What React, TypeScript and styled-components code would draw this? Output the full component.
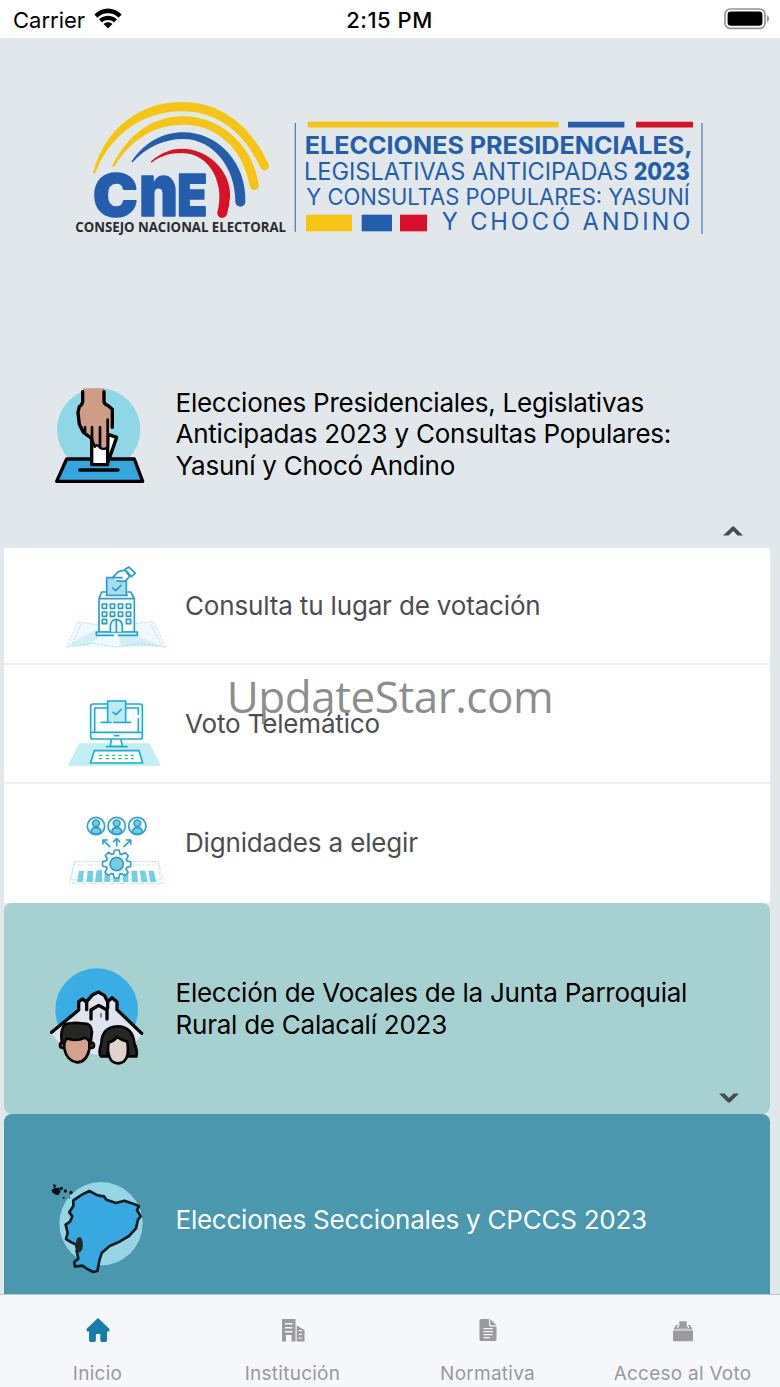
import type { ReactNode } from 'react';
import styled, { createGlobalStyle } from 'styled-components';

const BLUE = '#245dac';
const YELLOW = '#f6c514';
const RED = '#d91029';

const GlobalStyle = createGlobalStyle`
  * {
    box-sizing: border-box;
  }
  body {
    margin: 0;
    background: #e1e7ea;
    font-family: Inter, 'Liberation Sans', sans-serif;
  }
`;

/* ---------- Status bar ---------- */

function StatusBar() {
  return (
    <S.StatusBar>
      <S.Carrier>
        Carrier
        <svg width="28" height="21" viewBox="0 0 28 21">
          <path d="M0.3 6.6C8 -1.4 20 -1.4 27.7 6.6L24.6 9.7C18.6 3.8 9.4 3.8 3.4 9.7Z" />
          <path d="M5 11.3C10.2 6.5 17.8 6.5 23 11.3L20 14.4C16.4 11.2 11.6 11.2 8 14.4Z" />
          <path d="M9.5 15.9C12.2 13.7 15.8 13.7 18.5 15.9L14 20.6Z" />
        </svg>
      </S.Carrier>
      <S.Time>2:15 PM</S.Time>
      <S.Battery>
        <svg width="46" height="22" viewBox="0 0 46 22">
          <rect x="1" y="1" width="40" height="19.4" rx="5.5" fill="none" stroke="#949494" strokeWidth="1.7" />
          <rect x="3.6" y="3.6" width="34.8" height="14.2" rx="3.2" />
          <path d="M43 7.3C45.7 8.5 45.7 12.9 43 14.1Z" fill="#949494" />
        </svg>
      </S.Battery>
    </S.StatusBar>
  );
}

/* ---------- Logo ---------- */

function CneLogo() {
  return (
    <svg width="226" height="155" viewBox="0 0 678 465">
      <path
        fill={YELLOW}
        d="M84 250C120 110 230 36 350 36C470 36 557 108 610 221A13 13 0 0 1 587 235C540 130 460 64 350 64C240 64 135 130 91 250Z"
      />
      <path
        fill={YELLOW}
        d="M141 228C190 130 265 79 355 79C470 79 566 170 581 284A13 13 0 0 1 555 290C535 180 460 104 355 104C270 104 200 145 148 230Z"
      />
      <path
        fill={BLUE}
        d="M199 215C240 155 295 127 355 127C460 127 545 220 541 335A14.500 14.500 0 0 1 511 335C512 235 445 147 355 147C300 147 245 170 203 217Z"
      />
      <path
        fill={RED}
        d="M257 215C285 190 315 176 350 176C435 176 500 250 495 320Q493 350 486 372A14.500 14.500 0 0 1 457 366C480 290 440 189 350 189C315 189 285 198 260 218Z"
      />
      <g fill={BLUE} stroke={BLUE} strokeWidth="5" strokeLinejoin="round" fontWeight="900">
        <text x="84" y="377" fontSize="172" textLength="134" lengthAdjust="spacingAndGlyphs">C</text>
        <text x="222" y="377" fontSize="218" textLength="117" lengthAdjust="spacingAndGlyphs">n</text>
        <text x="337" y="377" fontSize="174" textLength="90" lengthAdjust="spacingAndGlyphs">E</text>
      </g>
      <text
        x="31"
        y="426"
        fontSize="42"
        fontFamily="'Open Sans', sans-serif"
        fontWeight="700"
        fill="#2b2a2d"
        textLength="632"
        lengthAdjust="spacingAndGlyphs"
      >
        CONSEJO NACIONAL ELECTORAL
      </text>
    </svg>
  );
}

function ElectionTitle() {
  return (
    <svg width="420" height="130" viewBox="0 0 1260 390">
      <path d="M16 39V365M1236 39V372" stroke="#5b82b8" strokeWidth="4" />
      <path d="M53 44H806" stroke={YELLOW} strokeWidth="17" />
      <path d="M834 44H1003" stroke={BLUE} strokeWidth="17" />
      <path d="M1038 44H1209" stroke={RED} strokeWidth="17" />
      <g fill={BLUE}>
        <text x="44" y="131" fontSize="71" fontWeight="700" textLength="1164" lengthAdjust="spacingAndGlyphs">
          ELECCIONES PRESIDENCIALES,
        </text>
        <text x="42" y="209" fontSize="71" fontWeight="400" textLength="972" lengthAdjust="spacingAndGlyphs">
          LEGISLATIVAS ANTICIPADAS
        </text>
        <text x="1031" y="209" fontSize="71" fontWeight="800" textLength="168" lengthAdjust="spacingAndGlyphs">
          2023
        </text>
        <text x="49" y="286" fontSize="67" fontWeight="400" textLength="1150" lengthAdjust="spacingAndGlyphs">
          Y CONSULTAS POPULARES: YASUNÍ
        </text>
        <text x="455" y="361" fontSize="71" fontWeight="400" textLength="746">
          Y CHOCÓ ANDINO
        </text>
      </g>
      <rect x="48" y="314" width="138" height="50" fill={YELLOW} />
      <rect x="215" y="314" width="91" height="50" fill={BLUE} />
      <rect x="330" y="314" width="81" height="50" fill={RED} />
    </svg>
  );
}

/* ---------- Section icons ---------- */

function BallotHandIcon() {
  return (
    <svg width="120" height="125" viewBox="0 0 360 375">
      <circle cx="176" cy="176" r="125" fill="#8fd6e7" />
      <g stroke="#000" strokeWidth="10" strokeLinejoin="round" strokeLinecap="round">
        <path d="M80 264H283L308 331H50Z" fill="#35a7df" />
        <path d="M119 297H234" />
        <path d="M204 190L230 199L207 265L200 280Z" fill="#fff" />
        <path d="M155 205H203V281H155Z" fill="#fff" />
        <path
          d="M129 52V92Q128 100 120 105L116 125L119 160L130 184L155 203L161 224Q166 233 173 225Q180 236 189 230Q194 237 201 228V180L217 169V115Q212 108 197 102L192 92V52Z"
          fill="#cf9c87"
          stroke="none"
        />
        <path d="M128 62V92Q127 101 118 107L114 125L118 160L130 184L155 202M192 62V92Q194 101 203 103L217 115V169" fill="none" />
        <path d="M135 169V184M156 168V205L164 227M180 168V228M203 146V226" fill="none" strokeWidth="8" />
        <path d="M164 226Q173 218 180 230Q192 238 202 229" fill="none" strokeWidth="7" />
      </g>
    </svg>
  );
}

function HousePeopleIcon() {
  return (
    <svg width="125" height="125" viewBox="0 0 375 375">
      <circle cx="185" cy="164" r="124" fill="#39ade4" />
      <path d="M48 233L131 160V138L145 130L157 142L173 119L190 110L210 122L219 136L232 127L246 138V161L322 237L299 265L183 300L70 262Z" fill="#dfe4ef" />
      <g fill="none" stroke="#050505" strokeWidth="10" strokeLinecap="round" strokeLinejoin="round">
        <path d="M50 232L131 165V140L143 132L155 142V164M155 140L173 119L190 111L208 121L218 140L231 128L246 141V164L320 235M218 138V159" />
        <path d="M168 192V165L191 151L216 165V192" />
        <path d="M198 176V186" strokeWidth="4" stroke="#444a68" />
      </g>
      <g stroke="#050505" strokeWidth="8">
        <circle cx="83" cy="271" r="8" fill="#b64b43" />
        <circle cx="169" cy="271" r="8" fill="#b64b43" />
        <path d="M87 245H163V283Q154 322 126 322Q96 318 88 282Z" fill="#d3a18e" />
        <path d="M80 258Q75 222 91 208Q115 200 145 206Q168 204 171 230L167 263Q158 252 150 248Q121 261 96 250L88 263Z" fill="#262625" />
        <path d="M198 304Q189 294 199 265Q201 216 247 214Q293 215 298 264Q309 290 304 304H280L274 260L247 248L222 264L217 304Z" fill="#262625" />
        <path d="M221 262Q236 260 246 246Q260 256 277 260Q284 306 266 320Q247 331 230 318Q214 297 221 262Z" fill="#dfd2cf" />
      </g>
    </svg>
  );
}

function EcuadorMapIcon() {
  return (
    <svg width="125" height="125" viewBox="0 0 375 375">
      <circle cx="198" cy="173" r="125" fill="#96d6e4" />
      <path
        d="M115 103L141 86L163 75L188 88L207 91L214 101L243 111L268 104L299 115L312 121L306 132L317 151L309 161L303 187L282 210L250 229L224 240L200 261L194 280L187 315L175 318L157 309L142 299L120 302L118 288L130 278L125 255L128 238L109 229L93 219L98 201L92 176L105 167L112 151L103 139L115 120Z"
        fill="#37a9e0"
        stroke="#171a1e"
        strokeWidth="8"
        strokeLinejoin="round"
      />
      <path d="M127 216Q141 208 143 231Q146 250 133 260Q119 251 120 238Z" fill="#252526" />
      <g fill="#0b1116">
        <path d="M54 55L64 57L60 66L72 65L77 76L72 86L63 87L53 80L49 71L57 68Z" />
        <circle cx="79" cy="67" r="5" />
        <circle cx="91" cy="75" r="5" />
        <circle cx="108" cy="80" r="5" />
        <circle cx="86" cy="96" r="3" />
        <circle cx="104" cy="95" r="2" />
      </g>
    </svg>
  );
}

/* ---------- Option icons ---------- */

function PollingPlaceIcon() {
  const windows = [157, 181, 205, 229];
  return (
    <svg width="130" height="110" viewBox="0 0 390 330">
      <path d="M88 201L148 207V238H252V205L309 199L342 276H54Z" fill="#f0fafc" />
      <path d="M85 251L139 224V240H158L111 272H60ZM205 243H263L337 274H214Z" fill="#d3eff5" />
      <g fill="none" stroke="#92d2dd" strokeWidth="2" strokeDasharray="7 4">
        <path d="M84 201L50 277L129 264L196 277L270 265L347 277L310 199L257 206M84 201L142 209M93 208L65 271M302 208L334 270" />
      </g>
      <g fill="none" stroke="#269fd0" strokeWidth="5" strokeLinejoin="round" strokeLinecap="round">
        <path d="M147 131L155 111H242L253 131V232H147ZM147 131H253" fill="#fff" />
        <path d="M139 231H262V241H206M190 241H139V231" fill="#d7f1f8" />
        <path d="M170 119V68H229V119" fill="#a7dded" />
        <path d="M168 121H232M188 99L197 107L213 91" />
        {windows.map((x) => (
          <g key={x}>
            <path d={`M${x} 147H${x + 13}V160H${x}ZM${x} 171H${x + 13}V184H${x}Z`} />
            {(x === 157 || x === 229) && <path d={`M${x} 193H${x + 13}V206H${x}Z`} />}
          </g>
        ))}
        <path d="M181 230V211Q184 193 199 193Q215 195 217 211V230M199 194V230" fill="#e8f7fb" />
        <path d="M188 68L205 50L225 45L239 64L229 76Q217 82 201 77M192 68H216M225 43L237 36L256 55L244 65Z" fill="#fff" />
      </g>
    </svg>
  );
}

function TelematicVoteIcon() {
  const keys = [149, 169, 188, 207, 226, 244];
  return (
    <svg width="130" height="95" viewBox="0 0 390 285">
      <path d="M87 175H298L332 242H54Z" fill="#c1edf3" />
      <g fill="none" stroke="#17afd0" strokeWidth="5" strokeLinejoin="round" strokeLinecap="round">
        <path d="M184 164L181 184H217L213 164M170 185H231" fill="#fff" />
        <rect x="122" y="57" width="155" height="105" rx="7" fill="#fff" />
        <path d="M134 138V69H172M229 69H265V88M265 101V138M123 142H276M194 152H206" />
        <path d="M173 109V48H227V109" fill="#bfeaf3" />
        <path d="M154 112H183M191 112H242M189 82L198 89L214 73" />
        <path d="M133 197H267L278 234H121Z" fill="#fff" />
        {keys.map((x) => (
          <path key={x} d={`M${x} 211H${x + 6}M${x} 221H${x + 6}`} strokeWidth="4" />
        ))}
      </g>
    </svg>
  );
}

function DignitiesIcon() {
  const teeth = [0, 45, 90, 135, 180, 225, 270, 315];
  return (
    <svg width="130" height="105" viewBox="0 0 390 315">
      <g fill="none" stroke="#a7dce8" strokeWidth="2" strokeDasharray="16 4 5 4">
        <path d="M74 185H325L342 250H57ZM84 195H315M64 239H334M74 185L62 242M325 185L332 245" />
      </g>
      <g fill="#73cfe3">
        <path d="M87 213H102L98 246H81ZM113 213H130L128 246H109ZM140 211H156V246H135ZM164 212H180V246H163ZM191 212H209V246H190ZM218 212H235V246H219ZM244 212H261L264 246H246ZM269 212H286L293 246H275ZM295 212H311L319 246H301Z" />
      </g>
      <g stroke="#2aa1d0" strokeWidth="5" strokeLinecap="round" strokeLinejoin="round">
        {[138, 200, 262].map((x) => (
          <g key={x}>
            <circle cx={x} cy="78" r="26" fill="#f3fbfd" />
            <path d={`M${x - 14} 98V94Q${x - 14} 83 ${x} 83Q${x + 14} 83 ${x + 14} 94V98Q${x} 107 ${x - 14} 98Z`} fill="#78cae3" />
            <circle cx={x} cy="70" r="10" fill="#78cae3" />
          </g>
        ))}
        <path d="M179 140L159 120M159 132V120H172M200 138V117M191 125L200 116L209 125M222 140L242 120M229 120H242V132" fill="none" />
        <g fill="#fff">
          {teeth.map((angle) => (
            <path key={angle} d="M190 164L194 150H207L211 164" transform={`rotate(${angle} 200 192)`} />
          ))}
          <circle cx="200" cy="192" r="32" />
          <g stroke="none">
            {teeth.map((angle) => (
              <path key={angle} d="M192 166L196 153H205L209 166Z" transform={`rotate(${angle} 200 192)`} />
            ))}
          </g>
        </g>
        <circle cx="200" cy="192" r="20" fill="#76cde4" />
      </g>
    </svg>
  );
}

/* ---------- Tab icons ---------- */

function HomeIcon() {
  return (
    <svg width="24" height="24" viewBox="0 0 24 24" fill="currentColor">
      <path d="M10.900 0.900Q12 -0.300 13.100 0.900L23 10.600Q24.300 12 22.800 13.400H21V21.900Q21 23.900 19.500 23.900H16Q14.300 23.900 14.300 22V16H9.900V22Q9.900 23.900 8.200 23.900H4.500Q3 23.900 3 21.900V13.400H1.200Q-0.300 12 1 10.600Z" />
    </svg>
  );
}

function InstitutionIcon() {
  return (
    <svg width="24" height="24" viewBox="0 0 24 24" fill="currentColor">
      <path
        fillRule="evenodd"
        d="M1 1H14.500V23.500H10.500V17H5V23.500H1ZM4 5V6.400H11.500V5ZM4 9V10.400H11.500V9ZM4 13V14.400H11.500V13Z"
      />
      <path
        fillRule="evenodd"
        d="M15.700 7.500L23.500 12V23.500H15.700ZM17.700 12V13.200H21V12ZM17.700 15.800V17H21V15.800ZM17.700 19.500V20.700H21V19.500Z"
      />
    </svg>
  );
}

function DocumentIcon() {
  return (
    <svg width="24" height="24" viewBox="0 0 24 24" fill="currentColor">
      <path
        fillRule="evenodd"
        d="M5 1H13V7.300Q13 8.500 14.200 8.500H20.500V21.700Q20.500 23 19.200 23H5Q3.500 23 3.500 21.500V2.500Q3.500 1 5 1ZM7.500 10V11.300H16.700V10ZM7.500 13V14.300H16.700V13ZM7.500 16V17.300H16.700V16ZM7.500 19V20.300H14V19Z"
      />
      <path d="M14.200 1L20.500 7.200H15.200Q14.200 7.200 14.200 6.200Z" />
    </svg>
  );
}

function BallotBoxIcon() {
  return (
    <svg width="24" height="24" viewBox="0 0 24 24" fill="currentColor">
      <path d="M2 12.500H22V22Q22 23.300 20.800 23.300H3.200Q2 23.300 2 22Z" />
      <path d="M8.300 3.200H15.700V8.800H17V10H7V8.800H8.300Z" />
      <path d="M5 7H7.200V8H6V10.200H18V8H16.800V7H19L21.600 11.500H2.400Z" />
    </svg>
  );
}

/* ---------- Screen ---------- */

interface OptionItem {
  label: string;
  icon: ReactNode;
  height: number;
  iconTop: number;
}

const options: OptionItem[] = [
  { label: 'Consulta tu lugar de votación', icon: <PollingPlaceIcon />, height: 117, iconTop: 9 },
  { label: 'Voto Telemático', icon: <TelematicVoteIcon />, height: 119, iconTop: 18 },
  { label: 'Dignidades a elegir', icon: <DignitiesIcon />, height: 119, iconTop: 20 },
];

const tabs = [
  { label: 'Inicio', icon: <HomeIcon />, active: true },
  { label: 'Institución', icon: <InstitutionIcon /> },
  { label: 'Normativa', icon: <DocumentIcon /> },
  { label: 'Acceso al Voto', icon: <BallotBoxIcon /> },
];

function Chevron({ up = false }: { up?: boolean }) {
  return (
    <svg width="20" height="10" viewBox="0 0 20 10">
      <path d={up ? 'M0 9.500L9.500 0.500H11L20 9.500H14.500L10.200 5L5.500 9.500Z' : 'M0 0.500H5.500L10 5L14.700 0.500H20L11 9.500H9Z'} fill="#474b4f" />
    </svg>
  );
}

export default function App() {
  return (
    <S.Screen>
      <GlobalStyle />
      <StatusBar />
      <S.Banner>
        <CneLogo />
        <ElectionTitle />
      </S.Banner>
      <S.Content>
        <S.Section $height={224} $bg="transparent" $indent={36}>
          <S.Icon $top={-6}>
            <BallotHandIcon />
          </S.Icon>
          <S.SectionTitle $top={-4}>
            Elecciones Presidenciales, Legislativas
            <br />
            Anticipadas 2023 y Consultas Populares:
            <br />
            Yasuní y Chocó Andino
          </S.SectionTitle>
          <S.Toggle $right={27} $bottom={12}>
            <Chevron up />
          </S.Toggle>
        </S.Section>
        {options.map(({ label, icon, height, iconTop }) => (
          <S.Option key={label} $height={height}>
            <S.Icon $top={iconTop}>{icon}</S.Icon>
            <S.OptionLabel>{label}</S.OptionLabel>
          </S.Option>
        ))}
        <S.Section $height={211} $bg="#a7d1d1" $indent={31}>
          <S.Icon $top={18}>
            <HousePeopleIcon />
          </S.Icon>
          <S.SectionTitle>
            Elección de Vocales de la Junta Parroquial
            <br />
            Rural de Calacalí 2023
          </S.SectionTitle>
          <S.Toggle $right={31} $bottom={11}>
            <Chevron />
          </S.Toggle>
        </S.Section>
        <S.Section $height={211} $bg="#4a97ae" $indent={31} $light>
          <S.Icon $top={17}>
            <EcuadorMapIcon />
          </S.Icon>
          <S.SectionTitle>Elecciones Seccionales y CPCCS 2023</S.SectionTitle>
        </S.Section>
      </S.Content>
      <S.TabBar>
        {tabs.map(({ label, icon, active }) => (
          <S.Tab key={label} $active={active}>
            {icon}
            <span>{label}</span>
          </S.Tab>
        ))}
      </S.TabBar>
      <S.Watermark>UpdateStar.com</S.Watermark>
    </S.Screen>
  );
}

const S = {
  Screen: styled.div`
    position: relative;
    width: 780px;
    height: 1387px;
    display: flex;
    flex-direction: column;
    overflow: hidden;
    background: #e1e7ea;

    svg {
      display: block;
      flex-shrink: 0;
    }
  `,
  StatusBar: styled.header`
    height: 38px;
    flex-shrink: 0;
    padding: 0 10px 0 13px;
    display: grid;
    grid-template-columns: 1fr auto 1fr;
    align-items: center;
    background: #fff;
    color: #000;
    font-size: 22px;
  `,
  Carrier: styled.div`
    display: flex;
    align-items: center;
    gap: 9px;
    padding-top: 1px;

    svg {
      margin-top: -2px;
    }
  `,
  Time: styled.div`
    margin-right: 4px;
    padding-top: 2px;
    font-weight: 550;
    letter-spacing: 0.5px;
  `,
  Battery: styled.div`
    display: flex;
    justify-content: flex-end;
  `,
  Banner: styled.div`
    height: 286px;
    flex-shrink: 0;
    display: flex;
    align-items: flex-start;
    padding: 52px 0 0 65px;

    svg + svg {
      margin: 20px 0 0 -1px;
    }
  `,
  Content: styled.main`
    flex: 1;
    min-height: 0;
    overflow: hidden;
    padding: 0 10px 0 4px;
  `,
  Section: styled.section<{ $height: number; $bg: string; $indent: number; $light?: boolean }>`
    position: relative;
    height: ${({ $height }) => $height}px;
    display: flex;
    align-items: center;
    padding-left: ${({ $indent }) => $indent}px;
    border-radius: 8px;
    background: ${({ $bg }) => $bg};
    color: ${({ $light }) => ($light ? '#fff' : '#000')};
  `,
  Icon: styled.div<{ $top: number }>`
    flex-shrink: 0;
    margin-top: ${({ $top }) => $top}px;
  `,
  SectionTitle: styled.h2<{ $top?: number }>`
    margin: ${({ $top = 0 }) => $top}px 0 0 15.5px;
    font-size: 26px;
    font-weight: 400;
    line-height: 31.5px;
    letter-spacing: -0.24px;
    white-space: nowrap;
  `,
  /* 섹션 우측 하단 화살표 */
  Toggle: styled.div<{ $right: number; $bottom: number }>`
    position: absolute;
    right: ${({ $right }) => $right}px;
    bottom: ${({ $bottom }) => $bottom}px;
  `,
  Option: styled.div<{ $height: number }>`
    height: ${({ $height }) => $height}px;
    display: flex;
    align-items: center;
    gap: 5px;
    padding-left: 46px;
    background: #fff;
    border-bottom: 2px solid #eeeff0;

    &:nth-child(4) {
      border-bottom-color: #fff;
    }
  `,
  OptionLabel: styled.span`
    color: #4d4d4f;
    font-size: 26px;
    letter-spacing: -0.16px;
    white-space: nowrap;
  `,
  TabBar: styled.nav`
    height: 93px;
    flex-shrink: 0;
    display: grid;
    grid-template-columns: repeat(4, 1fr);
    background: #f6f7fb;
    border-top: 1px solid #b9c4cb;
  `,
  Tab: styled.div<{ $active?: boolean }>`
    display: flex;
    flex-direction: column;
    align-items: center;
    padding-top: 23px;
    color: ${({ $active }) => ($active ? '#147dab' : '#9b9b9d')};

    span {
      margin-top: 20px;
      color: #99999b;
      font-size: 19px;
      line-height: 23px;
      letter-spacing: 0.25px;
      white-space: nowrap;
    }
  `,
  Watermark: styled.div`
    position: absolute;
    top: 666px;
    left: 0;
    width: 100%;
    text-align: center;
    color: rgba(110, 110, 110, 0.8);
    font-family: 'Open Sans', 'Noto Sans', sans-serif;
    font-size: 44px;
    line-height: 60px;
    letter-spacing: -0.45px;
    pointer-events: none;
  `,
};
